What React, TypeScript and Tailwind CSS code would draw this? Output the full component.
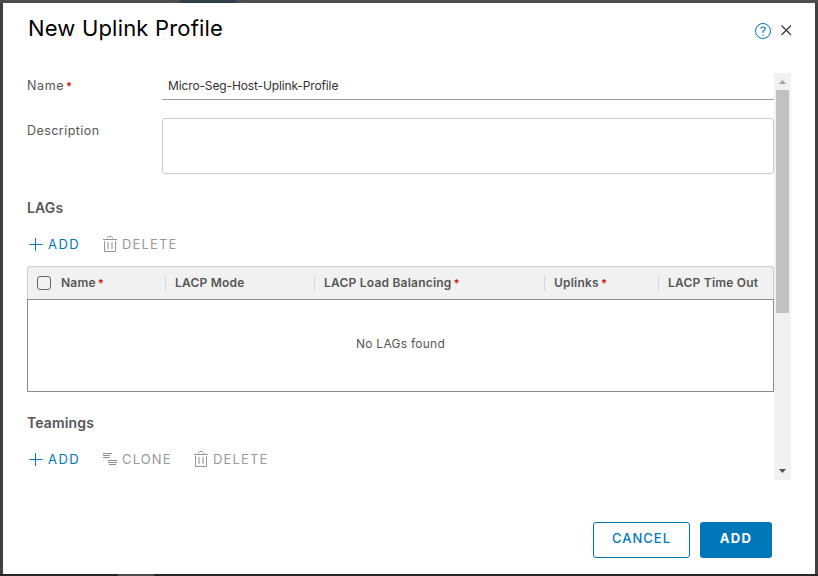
import type { ReactNode } from "react";

const Star = () => <span className="ml-[2px] text-[11px] font-bold leading-none tracking-normal text-[#c92100]">*</span>;

const PlusIcon = () => (
  <svg width="14" height="14" viewBox="0 0 14 14" fill="none" stroke="#0077b8" strokeWidth="1">
    <path d="M0.5 7.5H13.5M6.5 1V14" />
  </svg>
);

const TrashIcon = () => (
  <svg width="14" height="16" viewBox="0 0 14 16" fill="none" stroke="#969696" strokeWidth="1">
    <path d="M0 3.5H14M4.5 2.5V1.5L5.5 0.5H8.5L9.5 1.5V2.5M1.5 5V15.5H12.5V5" />
    <path d="M5 6V13M9 6V13" stroke="#a8a8a8" strokeWidth="1.3" />
  </svg>
);

const CloneIcon = () => (
  <svg width="14" height="14" viewBox="0 0 14 14" fill="none" stroke="#8c8c8c" strokeWidth="1">
    <path d="M0 1.5H9M0 3.5H7M0 5.5H7M5 8.5H14M5 10.5H14M6 12.5H13" />
  </svg>
);

type ActionProps = { icon: ReactNode; label: string; className: string };

const Action = ({ icon, label, className }: ActionProps) => (
  <button className={`flex h-5 items-center gap-[5px] text-[13px] leading-5 ${className}`}>
    {icon}
    <span>{label}</span>
  </button>
);

type ColumnProps = { label: string; className: string; required?: boolean; divider?: boolean };

const Column = ({ label, className, required, divider }: ColumnProps) => (
  <div className={`flex h-4 shrink-0 items-center whitespace-nowrap font-semibold tracking-[0.22px] ${divider ? "border-l border-[#d7d7d7] pl-[9px]" : ""} ${className}`}>
    <span>{label}</span>
    {required && <Star />}
  </div>
);

export default function App() {
  return (
    <div className="h-[576px] w-[818px] overflow-hidden bg-[#404040] font-['Inter','Liberation_Sans',sans-serif] text-[12.5px] text-[#565656]">
      <div className="flex h-[3px] bg-[#4d4d4d] pl-[180px]">
        <div className="h-[3px] w-14 bg-[#2f414c]" />
      </div>
      <div className="ml-[3px] flex h-[571px] w-[812px] flex-col bg-white">
        <header className="flex h-[70px] shrink-0 items-start justify-between pl-[25px] pr-[23px]">
          <h1 className="mt-[11px] text-[22px] leading-[28px] tracking-[0.18px] text-black">New Uplink Profile</h1>
          <div className="mt-5 flex items-start">
            <svg width="16" height="16" viewBox="0 0 16 16" fill="none" stroke="#0077b8">
              <circle cx="8" cy="8" r="7.5" />
              <path d="M5.7 5.8Q5.9 4 8 4Q10.3 4 10.3 5.8Q10.3 6.9 8 8.3V9.8M8 11.5V12.7" strokeWidth="1.1" />
            </svg>
            <svg className="ml-[10px] mt-[2px]" width="11" height="11" viewBox="0 0 11 11" fill="none" stroke="#313131" strokeWidth="1.1">
              <path d="M0.5 0.5L10 10M10 0.5L0.5 10" />
            </svg>
          </div>
        </header>

        <main className="flex h-[407px] shrink-0">
          <div className="ml-6 w-[747px] shrink-0">
            <div className="flex h-[27px]">
              <label className="flex w-[135px] items-center pb-px tracking-[0.6px]">Name<Star /></label>
              <input
                className="w-[612px] border-b border-[#9a9a9a] px-[6px] text-[12px] tracking-[-0.13px] text-[#313131] outline-none"
                defaultValue="Micro-Seg-Host-Uplink-Profile"
              />
            </div>
            <div className="mt-[18px] flex h-14">
              <label className="w-[135px] pt-[3px] leading-5 tracking-[0.45px]">Description</label>
              <textarea className="block h-14 w-[612px] resize-none rounded-[3px] border border-[#cccccc] outline-none" />
            </div>
            <h2 className="mt-6 text-[14px] font-semibold leading-5 tracking-[0.15px]">LAGs</h2>
            <div className="mt-4 flex pl-[2px]">
              <Action icon={<PlusIcon />} label="ADD" className="w-[74px] tracking-[1.5px] text-[#0077b8]" />
              <Action icon={<TrashIcon />} label="DELETE" className="tracking-[1.15px] text-[#9a9a9a]" />
            </div>
            <div className="mt-3 flex h-[33px] items-center rounded-t-[3px] border border-b-0 border-[#cccccc] bg-[#f1f1f1] pl-[9px] text-[12px]">
              <span className="mr-[10px] h-[14px] w-[14px] rounded-[3px] border-[1.5px] border-[#666666]" />
              <Column label="Name" required className="w-[104px]" />
              <Column label="LACP Mode" divider className="w-[149px]" />
              <Column label="LACP Load Balancing" required divider className="w-[230px]" />
              <Column label="Uplinks" required divider className="w-[114px]" />
              <Column label="LACP Time Out" divider className="w-[110px]" />
            </div>
            <div className="flex h-[93px] justify-center border border-[#8c8c8c] pt-[34px] text-[12px] leading-5 tracking-[0.25px]">No LAGs found</div>
            <h2 className="mt-[21px] text-[14px] font-semibold leading-5 tracking-[0.15px]">Teamings</h2>
            <div className="mt-4 flex pl-[2px]">
              <Action icon={<PlusIcon />} label="ADD" className="w-[74px] tracking-[1.5px] text-[#0077b8]" />
              <Action icon={<CloneIcon />} label="CLONE" className="w-[91px] tracking-[1.15px] text-[#9a9a9a]" />
              <Action icon={<TrashIcon />} label="DELETE" className="tracking-[1.15px] text-[#9a9a9a]" />
            </div>
          </div>
          <div className="flex w-[17px] flex-col items-center bg-[#f1f1f1]">
            <svg className="h-[17px] w-[17px] shrink-0" viewBox="0 0 17 17">
              <path d="M5 11H12L8.5 7Z" fill="#a0a0a0" />
            </svg>
            <div className="h-[223px] w-[13px] bg-[#c1c1c1]" />
            <svg className="mt-auto h-[17px] w-[17px] shrink-0" viewBox="0 0 17 17">
              <path d="M5 6H12L8.5 10Z" fill="#505050" />
            </svg>
          </div>
        </main>

        <footer className="flex justify-end gap-[10px] pr-[43px] pt-[42px] text-[13px] tracking-[1px]">
          <button className="h-9 w-[97px] rounded-[3px] border border-[#0077b8] pb-[3px] font-medium text-[#0077b8]">CANCEL</button>
          <button className="h-9 w-[72px] rounded-[3px] bg-[#0077b8] pb-[3px] font-bold tracking-[1.3px] text-white">ADD</button>
        </footer>
      </div>
      <div className="flex h-[2px] bg-[#2b2526] pl-[118px]">
        <div className="h-[2px] w-9 bg-[#504b4c]" />
      </div>
    </div>
  );
}
